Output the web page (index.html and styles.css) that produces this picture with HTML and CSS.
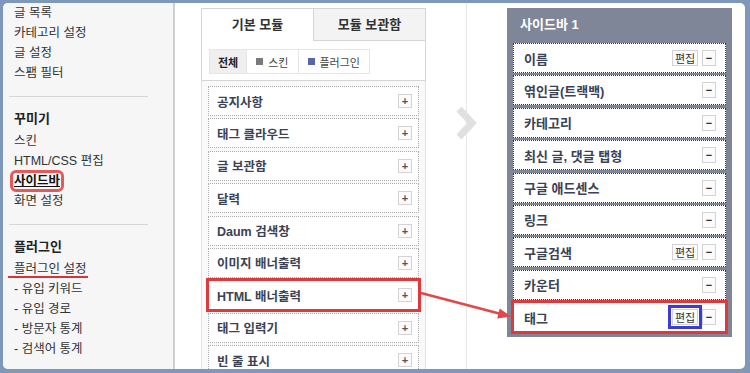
FILE: index.html
```html
<!DOCTYPE html>
<html>
<head>
    <meta charset="utf-8">
    <title>사이드바 설정</title>
    <link rel="stylesheet" href="styles.css">
</head>
<body>
<div class="frame">
    <nav class="nav">
        <ul class="nav-list">
            <li>글 목록</li>
            <li>카테고리 설정</li>
            <li>글 설정</li>
            <li>스팸 필터</li>
        </ul>
        <hr class="nav-sep">
        <h3 class="nav-title">꾸미기</h3>
        <ul class="nav-list">
            <li>스킨</li>
            <li>HTML/CSS 편집</li>
            <li><span class="nav-current">사이드바</span></li>
            <li>화면 설정</li>
        </ul>
        <hr class="nav-sep">
        <h3 class="nav-title">플러그인</h3>
        <ul class="nav-list">
            <li><span class="nav-mark">플러그인 설정</span></li>
            <li>- 유입 키워드</li>
            <li>- 유입 경로</li>
            <li>- 방문자 통계</li>
            <li>- 검색어 통계</li>
        </ul>
    </nav>

    <div class="main">
        <section class="modules">
            <div class="tab-box">
                <div class="tabs">
                    <div class="tab on">기본 모듈</div>
                    <div class="tab">모듈 보관함</div>
                </div>
                <div class="filter">
                    <span class="f on">전체</span>
                    <span class="f"><i class="sq skin"></i>스킨</span>
                    <span class="f"><i class="sq plugin"></i>플러그인</span>
                </div>
            </div>
            <ul class="mod-list">
                <li class="mod"><span>공지사항</span><b class="btn plus">+</b></li>
                <li class="mod"><span>태그 클라우드</span><b class="btn plus">+</b></li>
                <li class="mod"><span>글 보관함</span><b class="btn plus">+</b></li>
                <li class="mod"><span>달력</span><b class="btn plus">+</b></li>
                <li class="mod"><span>Daum 검색창</span><b class="btn plus">+</b></li>
                <li class="mod"><span>이미지 배너출력</span><b class="btn plus">+</b></li>
                <li class="mod hl-red"><span>HTML 배너출력</span><b class="btn plus">+</b></li>
                <li class="mod"><span>태그 입력기</span><b class="btn plus">+</b></li>
                <li class="mod"><span>빈 줄 표시</span><b class="btn plus">+</b></li>
            </ul>
        </section>

        <div class="gutter">
            <svg width="24" height="34" viewBox="0 0 24 34">
                <polyline points="4,3 17,17 4,31" fill="none" stroke="#e0e0e0" stroke-width="7"/>
            </svg>
        </div>

        <section class="sidebar">
            <h2 class="sb-title">사이드바 1</h2>
            <ul class="sb-list">
                <li class="sb"><span>이름</span><span class="tools"><b class="btn edit">편집</b><b class="btn minus">−</b></span></li>
                <li class="sb"><span>엮인글(트랙백)</span><span class="tools"><b class="btn minus">−</b></span></li>
                <li class="sb"><span>카테고리</span><span class="tools"><b class="btn minus">−</b></span></li>
                <li class="sb"><span>최신 글, 댓글 탭형</span><span class="tools"><b class="btn minus">−</b></span></li>
                <li class="sb"><span>구글 애드센스</span><span class="tools"><b class="btn minus">−</b></span></li>
                <li class="sb"><span>링크</span><span class="tools"><b class="btn minus">−</b></span></li>
                <li class="sb"><span>구글검색</span><span class="tools"><b class="btn edit">편집</b><b class="btn minus">−</b></span></li>
                <li class="sb"><span>카운터</span><span class="tools"><b class="btn minus">−</b></span></li>
                <li class="sb hl-red"><span>태그</span><span class="tools"><b class="btn edit hl-blue">편집</b><b class="btn minus">−</b></span></li>
            </ul>
        </section>

        <svg class="arrow" width="570" height="366" viewBox="0 0 570 366">
            <line x1="246" y1="290" x2="326" y2="311" stroke="#e24848" stroke-width="2.5"/>
            <polygon points="336,313.5 324.7,305.4 322.1,315.5" fill="#e24848"/>
        </svg>
    </div>
</div>
</body>
</html>
```

FILE: styles.css
```css
* {
    box-sizing: border-box;
}

body {
    margin: 0;
    width: 750px;
    height: 373px;
    background: #7d98b9;
    overflow: hidden;
    font-family: "Liberation Sans", "Noto Sans CJK KR", sans-serif;
    font-size: 12px;
    color: #333;
}

ul {
    margin: 0;
    padding: 0;
    list-style: none;
}

.frame {
    margin: 3px 5px 4px 3px;
    height: 366px;
    background: #fff;
    border-radius: 5px;
    overflow: hidden;
    display: flex;
}

/* left menu */
.nav {
    width: 172px;
    flex: none;
    background: #f6f6f6;
    border-right: 2px solid #cfcfcf;
    padding-left: 11px;
}

.nav-list li {
    line-height: 20px;
    height: 20px;
    font-size: 12.5px;
    white-space: nowrap;
}

.nav-sep {
    margin: 13px 0 12px -5px;
    width: 139px;
    border: 0;
    border-top: 1px solid #d6d6d6;
    height: 0;
}

.nav-title {
    margin: 0 0 2px;
    font-size: 13px;
    line-height: 20px;
    font-weight: bold;
    color: #222;
}

.nav-current {
    font-weight: bold;
    color: #111;
    text-decoration: underline;
    outline: 3px solid #e35a5a;
    outline-offset: 1px;
    border-radius: 2px;
}

.nav-mark {
    display: inline-block;
    line-height: 14px;
    margin-left: -6px;
    padding: 0 2px 0 6px;
    border-bottom: 2px solid #d8323a;
}

/* main area */
.main {
    flex: 1;
    position: relative;
    display: flex;
    align-items: flex-start;
    padding-left: 26px;
    overflow: hidden;
}

.modules {
    width: 225px;
    flex: none;
    margin-top: 5px;
}

.tab-box {
    border: 1px solid #d5d5d5;
    padding-bottom: 6px;
}

.tabs {
    display: flex;
    height: 32px;
}

.tab {
    flex: 1;
    text-align: center;
    line-height: 32px;
    font-size: 13px;
    font-weight: bold;
    color: #333;
    background: #f3f3f3;
    border-left: 1px solid #d5d5d5;
    border-bottom: 1px solid #d5d5d5;
}

.tab.on {
    background: #fff;
    border: 0;
}

.filter {
    display: inline-flex;
    margin: 8px 0 0 7px;
    height: 25px;
    border: 1px solid #e6e6e6;
    font-size: 11px;
}

.f {
    display: flex;
    align-items: center;
    padding: 0 9px;
    border-left: 1px solid #e6e6e6;
    color: #444;
}

.f.on {
    border-left: 0;
    background: #efefef;
    font-weight: bold;
    color: #222;
    padding: 0 8px;
}

.sq {
    width: 7px;
    height: 7px;
    margin-right: 5px;
}

.sq.skin {
    background: #7a7a7a;
}

.sq.plugin {
    background: #5567a8;
}

.mod-list {
    border-left: 1px solid #e2e2e2;
    border-right: 1px solid #e2e2e2;
    background: #f9f9f9;
    padding: 5px 6px;
}

.mod {
    height: 30px;
    margin-bottom: 2.4px;
    border: 1px dotted #aaa;
    background: #fff;
    display: flex;
    align-items: center;
    justify-content: space-between;
    padding: 0 6px 0 8px;
    font-size: 12.5px;
    font-weight: bold;
    color: #3b4254;
}

.btn {
    display: inline-flex;
    align-items: center;
    justify-content: center;
    height: 16px;
    border: 1px solid #d3d3d3;
    background: #fbfbfb;
    color: #333;
    font-size: 11px;
    font-weight: normal;
}

.plus {
    width: 14px;
    height: 14px;
    font-weight: bold;
    font-size: 11px;
    color: #555;
}

.hl-red {
    outline: 3px solid #e0393b;
    outline-offset: -1px;
}

.gutter {
    width: 81px;
    flex: none;
    align-self: stretch;
    display: flex;
    justify-content: center;
    padding-top: 103px;
    background: linear-gradient(#e8e8e8, #e8e8e8) no-repeat 40px 0 / 1px 100%;
}

.gutter svg {
    display: block;
}

/* sidebar box */
.sidebar {
    width: 225px;
    flex: none;
    margin-top: 5px;
    background: #7e8697;
    padding: 0 6px 5px;
}

.sb-title {
    margin: 0;
    height: 35px;
    line-height: 34px;
    padding-left: 7px;
    font-size: 13px;
    font-weight: bold;
    color: #fff;
}

.sb {
    height: 30px;
    margin-bottom: 2.4px;
    border: 1px dotted #333;
    background: #fff;
    display: flex;
    align-items: center;
    justify-content: space-between;
    padding: 0 9px 0 10px;
    font-size: 13px;
    font-weight: bold;
    color: #3b4254;
}

.sb:last-child {
    margin-bottom: 0;
}

.tools {
    display: flex;
    gap: 4px;
}

.edit {
    width: 26px;
}

.minus {
    width: 14px;
    font-weight: bold;
}

.hl-blue {
    outline: 3px solid #3b3bdb;
    outline-offset: 1px;
}

.arrow {
    position: absolute;
    left: 0;
    top: 0;
    pointer-events: none;
}
```
